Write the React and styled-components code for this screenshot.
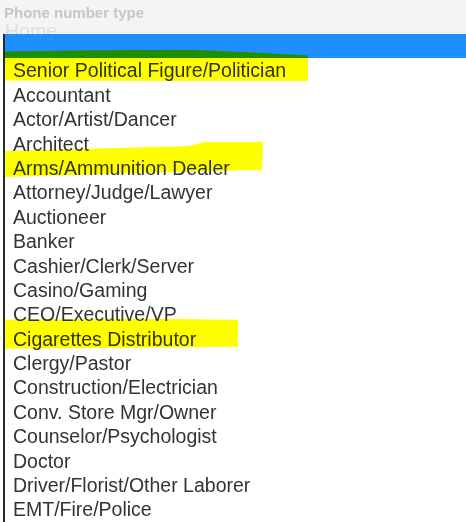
import React from "react";
import styled, { createGlobalStyle } from "styled-components";

const GlobalStyle = createGlobalStyle`
   html, body {
      margin: 0;
      padding: 0;
      background: #ffffff;
      font-family: "Liberation Sans", Arial, sans-serif;
   }
`;

const Page = styled.div`
   width: 466px;
   height: 522px;
   overflow: hidden;
   background: #ffffff;
`;

const Header = styled.div`
   height: 34px;
   background: #f5f4f2;
   padding-left: 4px;
   overflow: hidden;
   box-sizing: border-box;
`;

const Label = styled.div`
   font-size: 15px;
   font-weight: bold;
   color: #c6c6c6;
   line-height: 17px;
   padding-top: 4px;
`;

const Value = styled.div`
   font-size: 19.5px;
   color: #dedede;
   line-height: 22px;
   padding-left: 1px;
   margin-top: -1px;
`;

const List = styled.ul`
   list-style: none;
   margin: 0 0 0 3px;
   padding: 0;
   border-left: 2px solid #2a2a2a;
   background: #ffffff;
`;

const Option = styled.li`
   position: relative;
   height: 24.4px;
   line-height: 24.4px;
   padding-left: 8px;
   font-size: 19.5px;
   color: #333333;
   white-space: nowrap;
   background: ${({ selected }) => (selected ? "#1e8fff" : "transparent")};
`;

const Marker = styled.span`
   position: absolute;
   left: 0;
   background: #ffff00;
   mix-blend-mode: multiply;
   pointer-events: none;
   z-index: 2;
`;

const options = [
   { label: "" },
   {
      label: "Senior Political Figure/Politician",
      mark: {
         top: -8,
         width: 303,
         height: 31,
         clip: "0px 1px, 70px 0px, 180px -1px, 250px 2px, 303px 5px, 303px 31px, 0px 30px",
      },
   },
   { label: "Accountant" },
   { label: "Actor/Artist/Dancer" },
   { label: "Architect" },
   {
      label: "Arms/Ammunition Dealer",
      mark: {
         top: -14,
         width: 258,
         height: 36,
         clip: "0px 9px, 184px 4px, 200px 0px, 258px 0px, 257px 28px, 130px 31px, 0px 35px",
      },
   },
   { label: "Attorney/Judge/Lawyer" },
   { label: "Auctioneer" },
   { label: "Banker" },
   { label: "Cashier/Clerk/Server" },
   { label: "Casino/Gaming" },
   { label: "CEO/Executive/VP" },
   {
      label: "Cigarettes Distributor",
      mark: {
         top: -8,
         width: 233,
         height: 31,
         clip: "0px 1px, 150px 0px, 233px 1px, 233px 28px, 0px 30px",
      },
   },
   { label: "Clergy/Pastor" },
   { label: "Construction/Electrician" },
   { label: "Conv. Store Mgr/Owner" },
   { label: "Counselor/Psychologist" },
   { label: "Doctor" },
   { label: "Driver/Florist/Other Laborer" },
   { label: "EMT/Fire/Police" },
];

const App = () => {
   return (
      <Page>
         <GlobalStyle />
         <Header>
            <Label>Phone number type</Label>
            <Value>Home</Value>
         </Header>
         <List>
            {options.map((option, i) => (
               <Option key={i} selected={i === 0}>
                  {option.label}
                  {option.mark && (
                     <Marker
                        style={{
                           top: option.mark.top,
                           width: option.mark.width,
                           height: option.mark.height,
                           clipPath: `polygon(${option.mark.clip})`,
                        }}
                     />
                  )}
               </Option>
            ))}
         </List>
      </Page>
   );
};

export default App;
